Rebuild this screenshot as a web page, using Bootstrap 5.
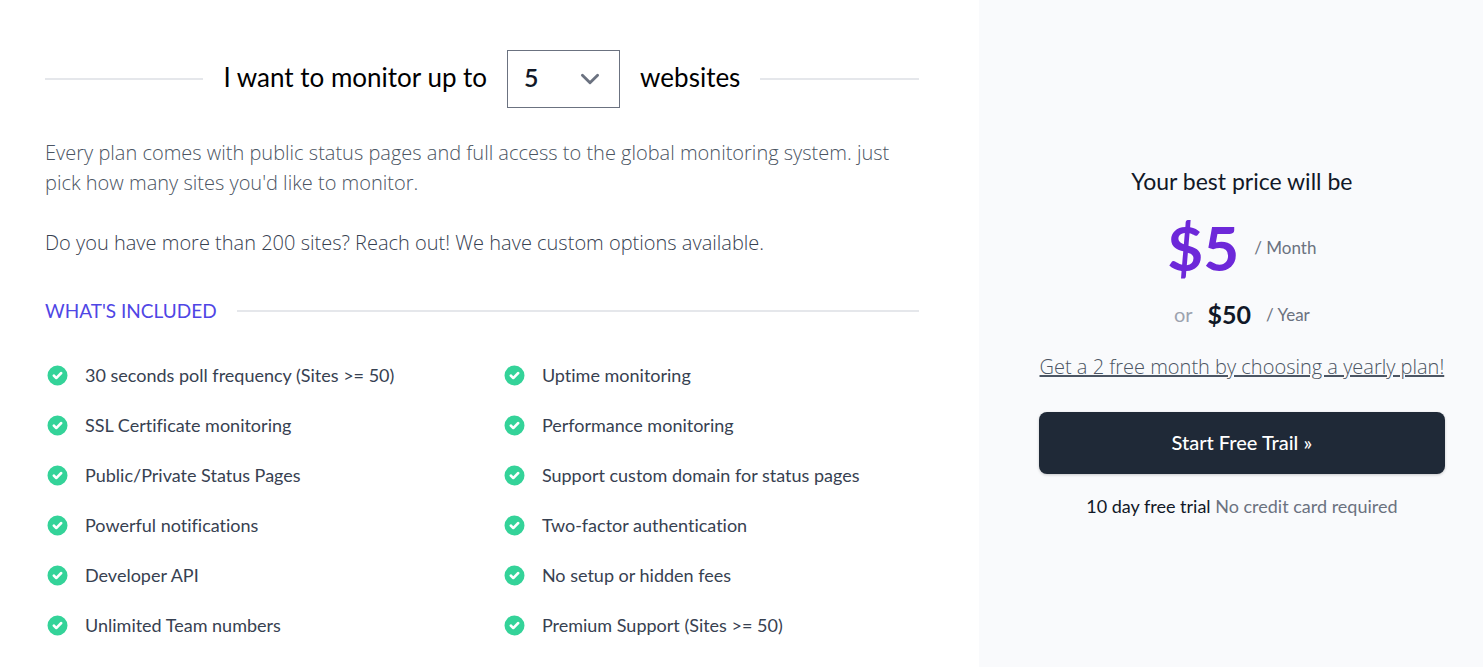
<!DOCTYPE html>
<html lang="en">
<head>
<meta charset="utf-8">
<meta name="viewport" content="width=device-width, initial-scale=1">
<title>Pricing</title>
<link href="https://cdn.jsdelivr.net/npm/bootstrap@5.3.0/dist/css/bootstrap.min.css" rel="stylesheet">
<style>
  body { font-family: Lato, "Open Sans", sans-serif; font-size: 18px; line-height: 25px; color: #374151; font-variant-ligatures: none; }
  .plan { padding: 50px 60px 25px 45px; }
  .price-panel { background: #f9fafc; padding: 36px 38px 20px 60px; }
  @media (min-width: 992px) {
    .plan { width: 66%; }
    .price-panel { width: 34%; }
  }
  .rule { height: 2px; background: #e5e7eb; }
  .picker { gap: 20px; margin-bottom: 30px; color: #000; font-size: 26px; line-height: 38px; }
  .picker > label, .picker > span { padding-bottom: 4px; }
  .picker .form-select {
    width: 113px; height: 58px; padding: 6px 40px 10px 16px; border: 1px solid #6b7280; border-radius: 0;
    color: #111827; font-size: 25px; line-height: 38px; font-weight: 600;
    background-image: url("data:image/svg+xml,%3csvg xmlns='http://www.w3.org/2000/svg' fill='none' viewBox='0 0 20 20'%3e%3cpath stroke='%236b7280' stroke-linecap='round' stroke-linejoin='round' stroke-width='1.5' d='M6 8l4 4 4-4'/%3e%3c/svg%3e");
    background-size: 38px 38px; background-position: right 10px center;
  }
  .copy { font-family: "Open Sans", Lato, sans-serif; font-weight: 300; font-size: 20px; line-height: 30px; margin-bottom: 30px; }
  .gray { color: #6b7280; }
  .copy.gray { color: #4b5563; }
  .included { gap: 20px; margin: 40px 0; }
  .section-title { font-size: 19px; line-height: 25px; font-weight: 400; color: #4f46e5; }
  .features { display: grid; grid-template-columns: 1fr 1fr; gap: 25px 40px; }
  .features li { gap: 15px; line-height: 24px; }
  .features svg { width: 25px; height: 25px; fill: #34d399; flex: none; }
  .intro { font-size: 23px; line-height: 35px; font-weight: 400; color: #111827; margin-bottom: 18px; }
  .amount { font-size: 62px; line-height: 60px; font-weight: 700; color: #6d28d9; }
  .amount-year { font-size: 25px; line-height: 35px; font-weight: 700; color: #111827; }
  .prices { gap: 15px; margin-bottom: 20px; }
  .period { font-size: 17px; }
  .or { font-size: 20px; color: #9ca3af; }
  .btn-start {
    --bs-btn-color: #fff; --bs-btn-bg: #1f2937; --bs-btn-hover-color: #fff; --bs-btn-hover-bg: #111827;
    --bs-btn-active-color: #fff; --bs-btn-active-bg: #111827;
    border: 0; border-radius: 8px; padding: 15px 20px 17px; font-size: 20px; line-height: 30px; font-weight: 500;
    box-shadow: 0 1px 3px rgba(0,0,0,.2); margin-bottom: 20px;
  }
  .trial { color: #111827; }
</style>
</head>
<body>
<svg class="d-none" aria-hidden="true">
  <symbol id="check" viewBox="0 0 20 20"><path fill-rule="evenodd" d="M10 18a8 8 0 100-16 8 8 0 000 16zm3.707-9.293a1 1 0 00-1.414-1.414L9 10.586 7.707 9.293a1 1 0 00-1.414 1.414l2 2a1 1 0 001.414 0l4-4z"/></symbol>
</svg>
<div class="container-fluid p-0">
  <div class="row g-0 min-vh-100">
    <main class="col-12 col-lg-8 plan">
      <div class="picker d-flex align-items-center">
        <div class="rule flex-grow-1"></div>
        <label for="sites">I want to monitor up to</label>
        <select id="sites" class="form-select">
          <option>5</option><option>10</option><option>20</option><option>50</option><option>100</option><option>200</option>
        </select>
        <span>websites</span>
        <div class="rule flex-grow-1"></div>
      </div>
      <p class="copy gray">Every plan comes with public status pages and full access to the global monitoring system. just pick how many sites you'd like to monitor.</p>
      <p class="copy">Do you have more than 200 sites? Reach out! We have custom options available.</p>
      <div class="included d-flex align-items-center">
        <h2 class="section-title mb-0">WHAT'S INCLUDED</h2>
        <div class="rule flex-grow-1"></div>
      </div>
      <ul class="features list-unstyled mb-0">
        <li class="d-flex"><svg><use href="#check"/></svg>30 seconds poll frequency (Sites &gt;= 50)</li>
        <li class="d-flex"><svg><use href="#check"/></svg>Uptime monitoring</li>
        <li class="d-flex"><svg><use href="#check"/></svg>SSL Certificate monitoring</li>
        <li class="d-flex"><svg><use href="#check"/></svg>Performance monitoring</li>
        <li class="d-flex"><svg><use href="#check"/></svg>Public/Private Status Pages</li>
        <li class="d-flex"><svg><use href="#check"/></svg>Support custom domain for status pages</li>
        <li class="d-flex"><svg><use href="#check"/></svg>Powerful notifications</li>
        <li class="d-flex"><svg><use href="#check"/></svg>Two-factor authentication</li>
        <li class="d-flex"><svg><use href="#check"/></svg>Developer API</li>
        <li class="d-flex"><svg><use href="#check"/></svg>No setup or hidden fees</li>
        <li class="d-flex"><svg><use href="#check"/></svg>Unlimited Team numbers</li>
        <li class="d-flex"><svg><use href="#check"/></svg>Premium Support (Sites &gt;= 50)</li>
      </ul>
    </main>
    <aside class="col-12 col-lg-4 price-panel d-flex flex-column justify-content-center text-center">
      <h1 class="intro">Your best price will be</h1>
      <div class="prices d-flex align-items-center justify-content-center">
        <span class="amount">$5</span>
        <span class="period gray">/ Month</span>
      </div>
      <div class="prices d-flex align-items-center justify-content-center">
        <span class="or">or</span>
        <span class="amount-year">$50</span>
        <span class="period gray">/ Year</span>
      </div>
      <a href="#" class="copy gray">Get a 2 free month by choosing a yearly plan!</a>
      <button type="button" class="btn btn-start w-100">Start Free Trail »</button>
      <p class="trial mb-0">10 day free trial <span class="gray">No credit card required</span></p>
    </aside>
  </div>
</div>
<script src="https://cdn.jsdelivr.net/npm/bootstrap@5.3.0/dist/js/bootstrap.bundle.min.js"></script>
</body>
</html>
